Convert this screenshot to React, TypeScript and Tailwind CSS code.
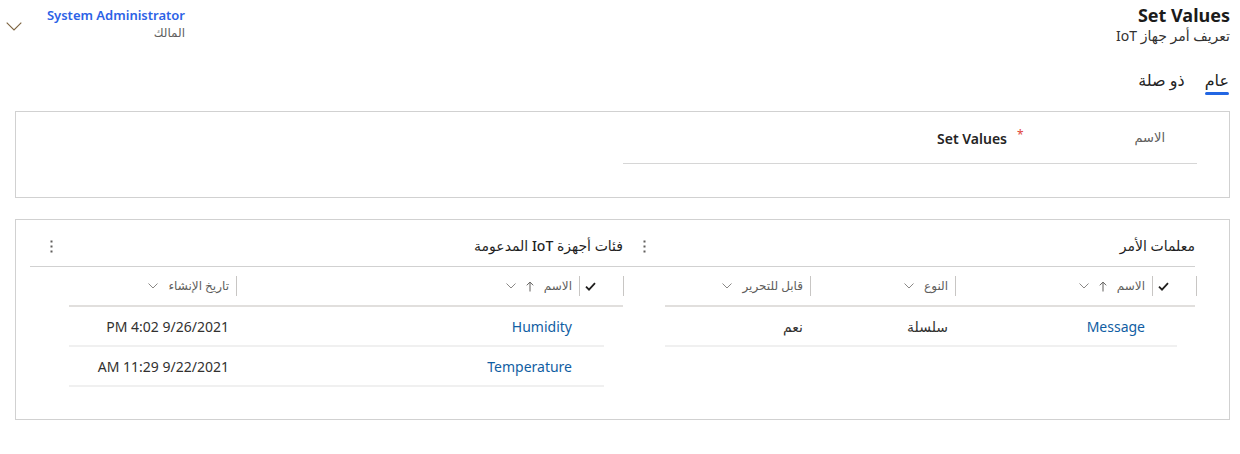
import React from 'react';

type Col = { label: string; width?: string; sort?: boolean };
type Cell = { text: string; link?: boolean };

const ChevronDown = () => (
  <svg width="10" height="6" viewBox="0 0 10 6" className="shrink-0">
    <path d="M0.5 0.5 L5 5 L9.5 0.5" fill="none" stroke="#8a8886" strokeWidth="1" />
  </svg>
);

const UpArrow = () => (
  <svg width="8" height="11" viewBox="0 0 8 11" className="shrink-0">
    <path d="M4 10.5 V1.2 M0.8 4.3 L4 1.1 L7.2 4.3" fill="none" stroke="#605e5c" strokeWidth="1" />
  </svg>
);

const Check = () => (
  <svg width="11" height="9" viewBox="0 0 11 9" className="shrink-0">
    <path d="M1 4.6 L4 7.6 L10 1.2" fill="none" stroke="#201f1e" strokeWidth="1.8" />
  </svg>
);

const Kebab = () => (
  <svg width="3" height="13" viewBox="0 0 3 13">
    <rect x="0.5" y="0.5" width="2" height="2" fill="#605e5c" />
    <rect x="0.5" y="5.5" width="2" height="2" fill="#605e5c" />
    <rect x="0.5" y="10.5" width="2" height="2" fill="#605e5c" />
  </svg>
);

const Sep = () => <div className="w-px h-[20px] bg-[#c8c6c4] shrink-0" />;

function SubGrid({
  title,
  cols,
  rows,
  headMr,
  lineMl,
  rowMl,
  rowMr,
  rowWidths,
}: {
  title: string;
  cols: Col[];
  rows: Cell[][];
  headMr: string;
  lineMl: string;
  rowMl: string;
  rowMr: string;
  rowWidths: string[];
}) {
  return (
    <div>
      <div className="flex items-center justify-between pt-[16px] pb-[10px] border-b border-[#d1d1d1]">
        <div className="text-[14px] leading-[20px] font-medium text-[#1f1f1f]">{title}</div>
        <div className="pl-[20px] flex items-center">
          <Kebab />
        </div>
      </div>
      <div className={`flex items-center h-[38px] ${headMr}`}>
        <Sep />
        <div className="w-[43px] flex justify-end pl-[5px]">
          <Check />
        </div>
        {cols.map((c) => (
          <React.Fragment key={c.label}>
            <Sep />
            <div className={`${c.width ?? 'flex-1'} flex items-center gap-[10px] pr-[7px] text-[12px] text-[#605e5c]`}>
              <span>{c.label}</span>
              {c.sort && <UpArrow />}
              <ChevronDown />
            </div>
          </React.Fragment>
        ))}
      </div>
      <div className={`h-[2px] bg-[#e1dfdd] ${lineMl}`} />
      <div className={`${rowMl} ${rowMr}`}>
        {rows.map((r, ri) => (
          <div key={ri} className="flex items-center h-[40px] border-b-2 border-[#f0f0f0]">
            <div className="w-[25px] shrink-0" />
            {r.map((c, ci) => (
              <div
                key={ci}
                className={`${rowWidths[ci]} pr-[7px] text-[14px] ${c.link ? 'text-[#115ea3]' : 'text-[#323130]'}`}
              >
                {c.text}
              </div>
            ))}
          </div>
        ))}
      </div>
    </div>
  );
}

export default function App() {
  return (
    <div
      dir="rtl"
      className="w-[1240px] h-[454px] bg-white overflow-hidden font-['Noto_Sans','DejaVu_Sans',sans-serif] text-[#323130]"
    >
      <header className="flex justify-between items-start pr-[10px]">
        <div className="pt-[3px]">
          <div className="text-[18px] leading-[24px] font-bold text-[#1b1b1b]">Set Values</div>
          <div className="text-[14px] leading-[18px] text-[#323130]">تعريف أمر جهاز IoT</div>
        </div>
        <div className="w-[185px] flex justify-between items-start pl-[6px]">
          <div className="pt-[5px]">
            <div className="text-[13px] leading-[20px] font-semibold text-[#2c62e6]">System Administrator</div>
            <div className="text-[12px] leading-[16px] text-[#605e5c]">المالك</div>
          </div>
          <svg width="16" height="9" viewBox="0 0 16 9" className="mt-[22px]">
            <path d="M0.7 0.7 L8 8 L15.3 0.7" fill="none" stroke="#7d6440" strokeWidth="1.1" />
          </svg>
        </div>
      </header>

      <nav className="flex gap-[20px] pr-[11px] mt-[24px]">
        <div className="flex flex-col">
          <span className="text-[16px] leading-[22px] font-medium text-[#1f1f1f]">عام</span>
          <span className="mt-[1px] h-[3px] rounded-full bg-[#2266e3]" />
        </div>
        <div className="flex flex-col">
          <span className="text-[16px] leading-[22px] text-[#242424]">ذو صلة</span>
        </div>
      </nav>

      <section className="ml-[15px] mr-[10px] mt-[16px] border border-[#d1d1d1] pl-[14px] pr-[34px] pt-[16px] pb-[33px]">
        <div className="w-[574px] -mr-[2px]">
          <div className="flex items-center h-[20px]">
            <div className="w-[182px] shrink-0 flex justify-between items-start pr-[32px]">
              <span className="text-[13px] text-[#605e5c]">الاسم</span>
              <span className="text-[12px] leading-[12px] text-[#e0443a] mt-[1px] ml-[2px]">*</span>
            </div>
            <div className="pr-[8px] text-[14px] font-semibold text-[#242424]">Set Values</div>
          </div>
          <div className="mt-[15px] h-px bg-[#d6d6d6]" />
        </div>
      </section>

      <section className="ml-[15px] mr-[10px] mt-[21px] border border-[#d1d1d1] pl-[14px] pr-[34px] pb-[32px] flex items-start">
        <div className="w-[572px] shrink-0">
          <SubGrid
            title="معلمات الأمر"
            headMr="-mr-[2px]"
            lineMl="ml-[42px]"
            rowMl="ml-[42px]"
            rowMr="mr-[18px]"
            cols={[
              { label: 'الاسم', width: 'w-[196px]', sort: true },
              { label: 'النوع', width: 'w-[144px]' },
              { label: 'قابل للتحرير' },
            ]}
            rowWidths={['w-[197px]', 'w-[145px]', 'flex-1']}
            rows={[[{ text: 'Message', link: true }, { text: 'سلسلة' }, { text: 'نعم' }]]}
          />
        </div>
        <div className="flex-1 min-w-0">
          <SubGrid
            title="فئات أجهزة IoT المدعومة"
            headMr="-mr-[1px]"
            lineMl="ml-[39px]"
            rowMl="ml-[39px]"
            rowMr="mr-[19px]"
            cols={[
              { label: 'الاسم', width: 'w-[342px]', sort: true },
              { label: 'تاريخ الإنشاء' },
            ]}
            rowWidths={['w-[343px]', 'flex-1']}
            rows={[
              [{ text: 'Humidity', link: true }, { text: '9/26/2021 4:02 PM' }],
              [{ text: 'Temperature', link: true }, { text: '9/22/2021 11:29 AM' }],
            ]}
          />
        </div>
      </section>
    </div>
  );
}
